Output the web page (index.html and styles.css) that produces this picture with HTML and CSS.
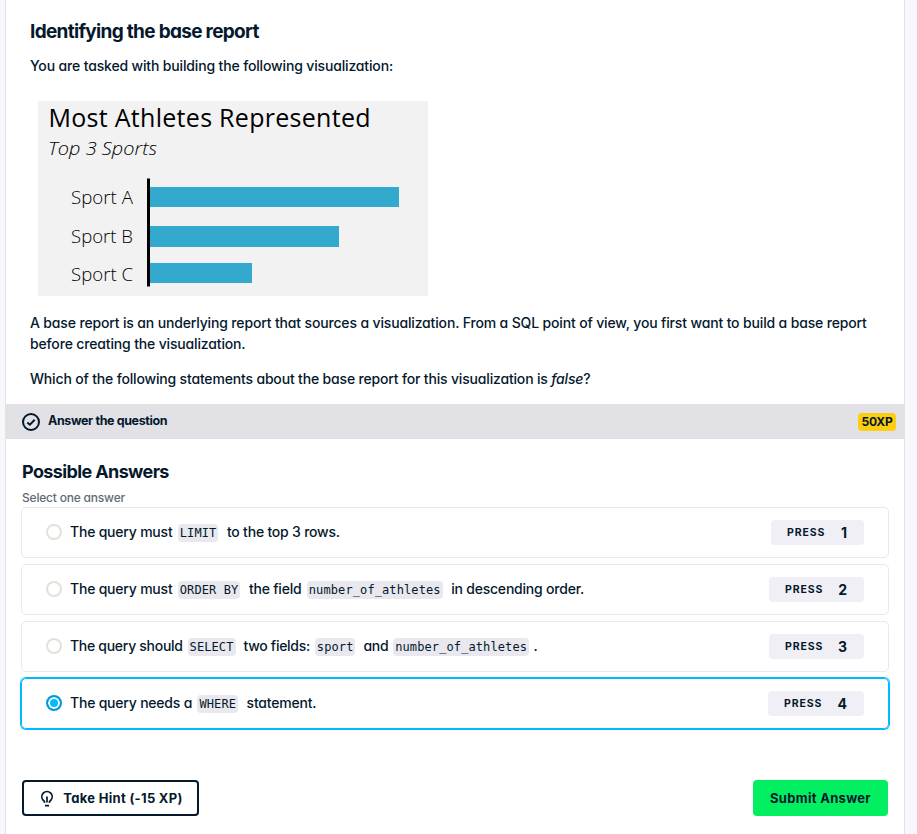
FILE: index.html
```html
<!DOCTYPE html>
<html lang="en">
<head>
<meta charset="utf-8">
<title>Identifying the base report</title>
<link rel="stylesheet" href="styles.css">
</head>
<body>
<main class="panel">
  <section class="lesson">
    <h1>Identifying the base report</h1>
    <p class="intro">You are tasked with building the following visualization:</p>
    <svg class="chart" width="390" height="195" viewBox="38 101 390 195" role="img" aria-label="Most Athletes Represented">
      <rect x="38" y="101" width="390" height="195" fill="#f2f2f2"/>
      <text x="48.5" y="127" font-size="25" textLength="322" class="chart-title">Most Athletes Represented</text>
      <text x="48" y="155" font-size="19" textLength="109" lengthAdjust="spacingAndGlyphs" font-style="italic">Top 3 Sports</text>
      <text x="71" y="204" font-size="19" textLength="62" lengthAdjust="spacingAndGlyphs">Sport A</text>
      <text x="71" y="243" font-size="19" textLength="62" lengthAdjust="spacingAndGlyphs">Sport B</text>
      <text x="71" y="281" font-size="19" textLength="62" lengthAdjust="spacingAndGlyphs">Sport C</text>
      <rect x="150" y="187" width="249" height="20" fill="#33a9ce"/>
      <rect x="150" y="226" width="189" height="21" fill="#33a9ce"/>
      <rect x="150" y="263" width="102" height="20" fill="#33a9ce"/>
      <rect x="147" y="178.5" width="3" height="108" fill="#000"/>
    </svg>
    <p class="about">A base report is an underlying report that sources a visualization. From a SQL point of view, you first want to build a base report<br>before creating the visualization.</p>
    <p class="ask">Which of the following statements about the base report for this visualization is <em>false</em>?</p>
  </section>
  <header class="bar">
    <svg width="18" height="18" viewBox="0 0 18 18" fill="none" stroke="#05192d" stroke-width="2"><circle cx="9" cy="9" r="8"/><path d="M5.3 9.4l2.6 2.3 4.8-5"/></svg>
    <span class="bar-title">Answer the question</span>
    <span class="xp">50XP</span>
  </header>
  <section class="answers">
    <h2>Possible Answers</h2>
    <p class="note">Select one answer</p>
    <ul>
      <li><i class="radio"></i><span class="text">The query must <code>LIMIT</code> to the top 3 rows.</span><kbd class="k1"><small>PRESS</small><b>1</b></kbd></li>
      <li><i class="radio"></i><span class="text">The query must <code>ORDER BY</code> the field <code>number_of_athletes</code> in descending order.</span><kbd class="k2"><small>PRESS</small><b>2</b></kbd></li>
      <li><i class="radio"></i><span class="text dense">The query should <code>SELECT</code> two fields: <code>sport</code> and <code>number_of_athletes</code>.</span><kbd class="k2"><small>PRESS</small><b>3</b></kbd></li>
      <li class="selected"><i class="radio"></i><span class="text">The query needs a <code>WHERE</code> statement.</span><kbd class="k4"><small>PRESS</small><b>4</b></kbd></li>
    </ul>
    <footer>
      <button class="hint"><svg width="14" height="17" viewBox="0 0 14 17" fill="none" stroke="#05192d" stroke-width="1.7"><path d="M4.6 12.8L4.4 11.4 2.9 9.9A5.2 5.2 0 1 1 11.1 9.9L9.6 11.4 9.4 12.8M7 6.5v6M5 15.6h4"/></svg><span>Take Hint (-15 XP)</span></button>
      <button class="submit"><span>Submit Answer</span></button>
    </footer>
  </section>
</main>
</body>
</html>
```
FILE: styles.css
```css
* { box-sizing: border-box; }
body {
  margin: 0;
  height: 834px;
  overflow: hidden;
  background: #f7f7fc;
  color: #05192d;
  font: 500 14px/21px Inter, "Liberation Sans", sans-serif;
  font-feature-settings: "cv11";
}
h1, h2, p, ul { margin: 0; padding: 0; }
.panel {
  height: 834px;
  margin: 0 12px 0 5px;
  border: solid #e1e1e8;
  border-width: 0 1px;
  background: #fff;
}
.lesson { height: 404px; padding: 20px 24px 0; white-space: nowrap; letter-spacing: -.153px; }
h1 { font-size: 19px; line-height: 24px; font-weight: 700; letter-spacing: -.69px; }
.intro { margin-top: 11px; }
.chart { display: block; margin: 25px 0 0 8px; font-family: "Open Sans", sans-serif; font-weight: 300; font-feature-settings: normal; letter-spacing: 0; }
.chart-title { font-weight: 400; }
.about { margin-top: 16px; }
.ask { margin-top: 14px; letter-spacing: -.17px; }
.bar { display: flex; align-items: center; height: 35px; padding: 0 8px 0 16px; background: #e1e1e6; font-weight: 700; }
.bar-title { margin: -2px auto 0 8px; font-size: 12.5px; letter-spacing: -.38px; }
.xp { width: 38px; height: 18px; border-radius: 4px; background: #fcce0d; font-size: 12px; line-height: 18px; text-align: center; letter-spacing: -.3px; }
.answers { padding: 20px 15px 0; }
h2 { margin-left: 1px; font-size: 18px; line-height: 26px; font-weight: 700; letter-spacing: -.62px; }
.note { margin-left: 1px; height: 22px; padding-top: 4px; color: #5f6b78; font-size: 12px; line-height: 18px; letter-spacing: -.2px; }
ul { display: grid; gap: 6px; list-style: none; }
li { display: flex; align-items: center; height: 51px; padding: 0 24px; border: 1px solid #e8e8ee; border-radius: 5px; }
.selected { border-color: #00bbff; box-shadow: 0 0 0 1px #00bbff; }
.radio { width: 16px; height: 16px; margin-bottom: 1px; border: 2px solid #e5e1da; border-radius: 50%; }
.selected .radio { border-color: #009bd8; background: #00bbff; box-shadow: inset 0 0 0 2px #fff; }
.text { margin: -2px auto 0 8px; white-space: nowrap; letter-spacing: -.21px; }
.dense { letter-spacing: -.29px; }
code { display: inline-block; height: 18px; margin: 0 5px 0 1.8px; padding: 0 2px; border-radius: 4px; background: #e8e8ee; font: 400 12px/18px "DejaVu Sans Mono", monospace; letter-spacing: .1px; }
.dense code { margin-right: 4.5px; margin-left: 1.5px; }
kbd { display: flex; align-items: center; justify-content: space-between; height: 25px; padding: 0 17px 0 16px; border-radius: 4px; background: #efeff5; font: inherit; }
.k1 { width: 93px; }
.k2 { width: 95px; }
.k4 { width: 96px; }
small { font-size: 10.5px; font-weight: 700; letter-spacing: .9px; }
b { font-weight: 700; }
footer { display: flex; justify-content: space-between; margin-top: 51px; padding: 0 1px; }
button { display: flex; align-items: center; justify-content: center; height: 36px; border: 0; border-radius: 4px; background: #fff; color: inherit; font: 700 13px/20px Inter, sans-serif; font-feature-settings: inherit; letter-spacing: .3px; white-space: nowrap; }
.hint { width: 177px; padding: 0 4px 0 6px; border: 2px solid #05192d; gap: 9px; }
.submit { width: 135px; background: #03ef62; }
```
